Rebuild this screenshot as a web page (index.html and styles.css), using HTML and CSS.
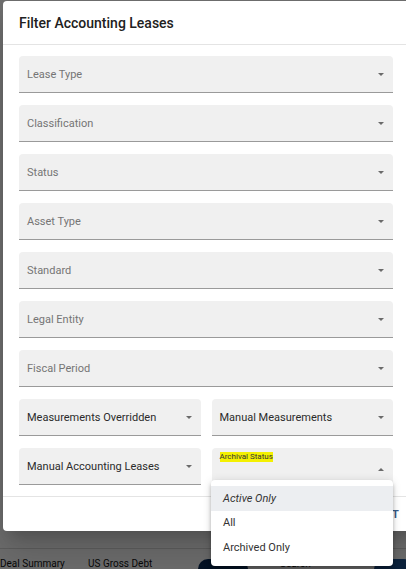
FILE: index.html
```html
<!DOCTYPE html>
<html>
<head>
<meta charset="utf-8">
<link rel="stylesheet" href="styles.css">
</head>
<body>
<div class="page">
  <div class="page-bottom">
    <span class="bg-text">Deal Summary</span>
    <span class="bg-text second">US Gross Debt</span>
    <span class="bg-pill"></span>
    <span class="bg-text third">Search</span>
    <span class="bg-blue"></span>
  </div>
</div>
<div class="overlay"></div>
<div class="dialog">
  <div class="dialog-title">Filter Accounting Leases</div>
  <div class="dialog-content">
    <div class="field"><span class="label">Lease Type</span><span class="arrow"></span></div>
    <div class="field"><span class="label">Classification</span><span class="arrow"></span></div>
    <div class="field"><span class="label">Status</span><span class="arrow"></span></div>
    <div class="field"><span class="label">Asset Type</span><span class="arrow"></span></div>
    <div class="field"><span class="label">Standard</span><span class="arrow"></span></div>
    <div class="field"><span class="label">Legal Entity</span><span class="arrow"></span></div>
    <div class="field"><span class="label">Fiscal Period</span><span class="arrow"></span></div>
    <div class="row">
      <div class="field"><span class="value">Measurements Overridden</span><span class="arrow"></span></div>
      <div class="field"><span class="value">Manual Measurements</span><span class="arrow"></span></div>
    </div>
    <div class="row">
      <div class="field"><span class="value">Manual Accounting Leases</span><span class="arrow"></span></div>
      <div class="field open"><span class="small-label">Archival Status</span><span class="arrow up"></span></div>
    </div>
  </div>
  <div class="dialog-actions">
    <span class="btn">CANCEL</span>
    <span class="btn">RESET</span>
  </div>
</div>
<ul class="menu">
  <li class="item active">Active Only</li>
  <li class="item">All</li>
  <li class="item">Archived Only</li>
</ul>
</body>
</html>
```

FILE: styles.css
```css
* { box-sizing: border-box; }
html, body {
  margin: 0;
  padding: 0;
  width: 406px;
  height: 569px;
  overflow: hidden;
  font-family: Roboto, "Liberation Sans", Arial, sans-serif;
}
.page {
  width: 406px;
  height: 569px;
  background: #f4f4f4;
  position: relative;
}
.page-bottom {
  position: absolute;
  left: 0;
  right: 0;
  top: 548px;
  height: 21px;
  border-top: 1px solid #d0d0d0;
}
.bg-text {
  font-size: 10px;
  line-height: 10px;
  color: #111;
  position: absolute;
  left: 0;
  top: 10px;
}
.bg-text.second { left: 88px; }
.bg-text.third { left: 280px; }
.bg-pill {
  position: absolute;
  left: 198px;
  top: 10px;
  width: 50px;
  height: 20px;
  border-radius: 10px;
  background: #0c2a55;
}
.bg-blue {
  position: absolute;
  left: 374px;
  top: 10px;
  width: 40px;
  height: 20px;
  border-radius: 10px;
  background: #1c4f8a;
}
.overlay {
  position: absolute;
  inset: 0;
  background: rgba(0, 0, 0, 0.55);
}
.dialog {
  position: absolute;
  left: 3px;
  top: 1px;
  width: 420px;
  height: 530px;
  background: #fff;
  border-radius: 4px;
  box-shadow: 0 11px 15px -7px rgba(0,0,0,.2), 0 24px 38px 3px rgba(0,0,0,.14);
  display: flex;
  flex-direction: column;
}
.dialog-title {
  height: 44px;
  padding: 0 16px;
  display: flex;
  align-items: center;
  font-size: 14px;
  font-weight: 500;
  color: #212121;
  border-bottom: 1px solid #e4e4e4;
}
.dialog-content {
  padding: 11px 16px 0;
  width: 406px;
  display: flex;
  flex-direction: column;
  gap: 12px;
  height: 451px;
}
.row {
  display: flex;
  gap: 11px;
}
.row .field { flex: 1; }
.field {
  height: 37px;
  background: #f0f0f0;
  border-radius: 4px 4px 0 0;
  border-bottom: 1px solid #9a9a9a;
  display: flex;
  align-items: center;
  padding: 0 9px 0 8px;
  position: relative;
}
.label {
  font-size: 11px;
  color: #757575;
  flex: 1;
}
.value {
  font-size: 11px;
  color: #2b2b2b;
  flex: 1;
}
.arrow {
  width: 0;
  height: 0;
  border-left: 3.5px solid transparent;
  border-right: 3.5px solid transparent;
  border-top: 3.5px solid #6a6a6a;
}
.arrow.up {
  border-top: 0;
  border-bottom: 3.5px solid #6a6a6a;
  margin-left: auto;
  margin-top: 6px;
}
.small-label {
  position: absolute;
  left: 8px;
  top: 4px;
  font-size: 8px;
  color: #333;
  background: #f4f000;
  line-height: 10px;
}
.dialog-actions {
  flex: 1;
  border-top: 1px solid #e4e4e4;
  display: flex;
  align-items: center;
  justify-content: flex-end;
  gap: 16px;
  padding-right: 24px;
}
.btn {
  font-size: 11px;
  font-weight: 700;
  color: #3b5a84;
  letter-spacing: 0.3px;
}
.menu {
  position: absolute;
  left: 211px;
  top: 480px;
  width: 182px;
  margin: 0;
  padding: 6px 0;
  list-style: none;
  background: #fff;
  border-radius: 4px;
  box-shadow: 0 2px 4px -1px rgba(0,0,0,.2), 0 4px 5px 0 rgba(0,0,0,.14), 0 1px 10px 0 rgba(0,0,0,.12);
}
.item {
  height: 24.5px;
  display: flex;
  align-items: center;
  padding-left: 12px;
  font-size: 11px;
  color: #333;
}
.item.active {
  background: #eceef1;
  font-style: italic;
}
```
